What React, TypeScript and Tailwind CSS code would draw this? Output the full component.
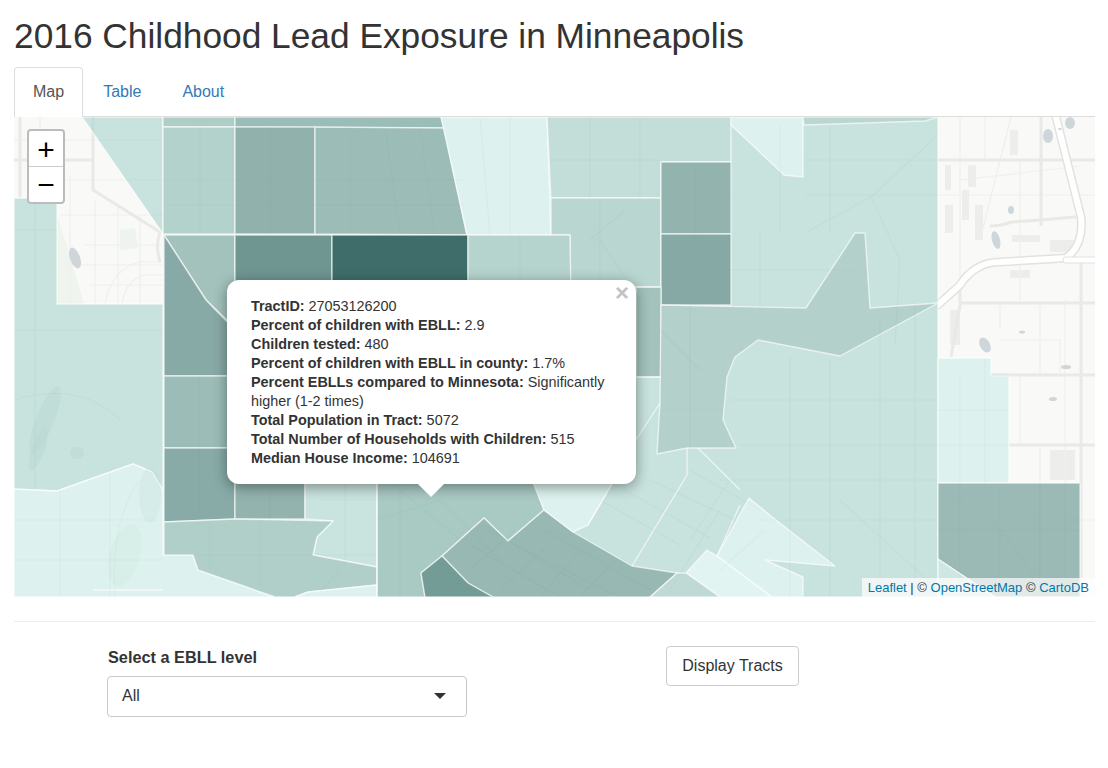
const sans = "font-['Liberation_Sans',Arial,sans-serif]";

type Tract = { readonly fill: string; readonly points: string };

// page coordinates, the map svg uses a matching viewBox
const tracts: ReadonlyArray<Tract> = [
  { fill: '#c8e2dd', points: '163,117 938,117 938,597 163,597' },
  { fill: '#c8e2dd', points: '14,198 57,198 57,304 163,304 163,490 152,472 133,464 57,491 14,489' },
  { fill: '#c8e2dd', points: '82,117 163,117 163,234' },
  { fill: '#ddf2ee', points: '14,489 57,491 133,464 152,472 163,490 163,555 193,555 198,570 275,597 14,597' },
  { fill: '#aecdc7', points: '163,117 235,117 235,127 163,127' },
  { fill: '#b4d2cc', points: '163,127 235,127 235,234 163,234' },
  { fill: '#9bbdb7', points: '235,117 441,117 444,128 235,127' },
  { fill: '#91b2ac', points: '235,127 315,127 315,234 235,234' },
  { fill: '#9cbdb7', points: '315,127 444,128 467,235 315,234' },
  { fill: '#ddf2ee', points: '441,117 547,117 551,235 467,235' },
  { fill: '#c3ddd8', points: '547,117 731,117 731,162 661,162 661,198 551,198' },
  { fill: '#b9d6d0', points: '551,198 661,198 661,287 570,287 570,235 551,235' },
  { fill: '#93b3ae', points: '661,162 731,162 731,234 661,234' },
  { fill: '#87a9a6', points: '661,234 731,234 731,305 661,305' },
  { fill: '#a3c2bc', points: '164,235 235,235 235,330 227,320 206,300' },
  { fill: '#88aaa6', points: '164,235 206,300 235,330 235,376 164,376' },
  { fill: '#6f9691', points: '235,235 332,235 332,300 235,300' },
  { fill: '#3f6e6a', points: '332,235 468,235 468,300 332,300' },
  { fill: '#b6d4ce', points: '468,235 570,235 571,300 468,300' },
  { fill: '#a3c2bc', points: '571,288 661,287 661,377 571,377' },
  { fill: '#9cbdb7', points: '164,376 235,376 235,448 164,448' },
  { fill: '#88aba7', points: '164,448 235,448 235,519 164,522' },
  { fill: '#92b3ae', points: '235,448 305,448 305,519 235,519' },
  { fill: '#c9e3de', points: '305,448 377,448 377,567 313,555 317,537 333,521 305,519' },
  { fill: '#b0cfc9', points: '164,522 235,519 333,521 317,537 313,555 377,567 377,585 308,592 295,597 275,597 198,570 193,555 164,555' },
  { fill: '#ddf2ee', points: '295,597 308,592 377,585 377,597' },
  { fill: '#a9c9c3', points: '377,470 530,470 544,510 508,541 484,518 442,556 421,573 425,597 377,597' },
  { fill: '#97b8b3', points: '442,556 484,518 508,541 544,510 573,532 632,566 677,573 650,597 493,597 468,583' },
  { fill: '#729c95', points: '442,556 468,583 493,597 425,597 421,573' },
  { fill: '#ddf2ee', points: '528,470 620,470 588,525 573,532 544,510' },
  { fill: '#ddf2ee', points: '731,117 803,117 803,177 784,175 731,125' },
  { fill: '#b9d6d0', points: '803,117 938,117 925,121 804,125' },
  { fill: '#b3d0ca', points: '661,305 806,308 855,233 865,233 870,308 938,303 840,356 758,340 735,357 727,377 723,420 736,448 687,448 657,454 660,403' },
  { fill: '#ddf2ee', points: '717,556 749,498 776,520 835,566 765,560 803,577 803,597 772,597' },
  { fill: '#e2f4f1', points: '707,550 717,556 772,597 720,597 686,573' },
  { fill: '#bfdad5', points: '677,573 686,573 720,597 650,597' },
  { fill: '#ddf2ee', points: '938,358 991,358 991,376 1009,376 1009,483 938,483' },
  { fill: '#9bbab5', points: '938,483 1080,483 1080,597 995,597 938,559' },
  { fill: '#cfe7e2', points: '938,559 995,597 938,597' },
];

const boundaries = [
  'M660 403 L636 440',
  'M687 448 L687 475 L632 566',
  'M698 448 L740 490',
  'M612 484 L588 525',
  'M636 288 L636 377 L661 377',
  'M377 448 L377 597',
  'M93 590 L163 590',
  'M740 505 L717 556',
];

const majorRoads = [
  'M938 160 H1095',
  'M1041 117 V226',
  'M990 226 Q1000 226 1012 222 L1041 220 L1085 216',
  'M1081 262 V597',
  'M960 303 H1095',
  'M991 375 H1095',
  'M1009 445 H1095',
  'M960 290 L960 305 L951 357',
  'M14 160 H93',
  'M20 117 V198',
  'M93 117 V190 L160 232 Q155 245 160 262',
];

const minorRoads = [
  'M14 140 H160', 'M60 180 H160', 'M60 215 H163', 'M85 245 H163', 'M60 265 H163', 'M90 285 H163',
  'M40 117 V198', 'M70 175 V304', 'M95 200 V304', 'M118 205 V304', 'M140 215 V304',
  'M105 304 Q112 268 140 262 H163',
  'M122 304 Q125 280 145 275 H163',
  'M938 195 H1095', 'M960 117 V300', 'M985 117 V160', 'M1020 160 V300', 'M1065 300 V597',
  'M1000 303 V330', 'M1040 303 V375', 'M1020 375 V445', 'M1010 520 H1095', 'M1040 445 V597',
  'M1011 117 L980 240',
  'M960 180 L1081 166',
  'M1000 340 H1060 V375',
  'M14 330 H163', 'M14 400 Q80 380 120 420', 'M14 520 H163', 'M14 560 H163', 'M60 489 V597', 'M110 470 V597',
  'M140 480 Q110 520 115 597', 'M14 230 H57', 'M35 198 V489',
  'M200 127 V234', 'M270 127 V234', 'M350 127 V234', 'M385 127 L400 234', 'M420 128 L435 234',
  'M163 180 H465', 'M163 205 H465', 'M480 117 L490 235', 'M510 117 V235',
  'M547 160 H661', 'M590 117 V198', 'M640 117 V198', 'M600 198 V287', 'M625 210 L590 240',
  'M696 162 V305', 'M661 198 H731', 'M661 270 H731',
  'M780 125 V233', 'M830 125 V233', 'M804 160 H938', 'M804 195 H938', 'M871 197 L805 233',
  'M938 135 L871 197 L900 260 L895 345', 'M760 233 V308', 'M731 270 H855',
  'M200 376 V448', 'M200 448 V519', 'M270 448 V519', 'M210 522 V570', 'M260 519 V585', 'M164 555 H377',
  'M345 484 V565', 'M320 500 H377', 'M340 570 L320 592',
  'M468 270 H570', 'M520 235 V300', 'M600 240 L640 300',
  'M690 305 V450', 'M700 370 L660 330', 'M660 410 H723', 'M790 356 V597', 'M830 360 V597', 'M880 320 V597', 'M915 305 V597',
  'M730 400 H938', 'M740 445 H938', 'M720 480 H938', 'M760 520 H938', 'M840 500 L938 590',
  'M400 484 V597', 'M377 520 L440 500', 'M400 490 L460 540', 'M440 500 L500 560',
  'M470 545 L560 597', 'M490 530 L590 590', 'M515 545 L620 597', 'M545 530 L650 590',
  'M470 570 L515 530', 'M500 590 L545 548', 'M540 597 L580 550', 'M580 597 L615 560',
  'M600 500 L680 545', 'M625 490 L710 538', 'M650 480 L735 520', 'M690 540 L730 480', 'M670 590 L720 510',
  'M690 470 L760 510', 'M720 570 L765 530', 'M950 500 Q1000 510 1040 590', 'M1000 483 V597', 'M938 530 H1080', 'M960 483 V597', 'M1040 483 V597',
  'M960 376 V483', 'M985 358 V483', 'M938 410 H1009', 'M938 445 H1009',
];

const Roads = ({ major, minor, opacity }: { readonly major: string; readonly minor: string; readonly opacity?: number }) => (
  <g fill="none" strokeOpacity={opacity}>
    <g stroke={minor} strokeWidth="1.2">
      {minorRoads.map((d) => (
        <path key={d} d={d} />
      ))}
    </g>
    <g stroke={major} strokeWidth="3">
      {majorRoads.map((d) => (
        <path key={d} d={d} />
      ))}
    </g>
  </g>
);

const MapPicture = () => (
  <svg viewBox="14 117 1081 480" className="block h-[480px] w-full">
    <rect x="14" y="117" width="1081" height="480" fill="#f9f9f7" />
    <polygon points="57,215 65,240 84,304 57,304" fill="#eff4ee" />
    <polygon points="120,230 135,228 138,248 120,250" fill="#eff3ee" />
    <g fill="#ededeb">
      <rect x="945" y="165" width="6" height="25" />
      <rect x="968" y="165" width="8" height="22" />
      <rect x="945" y="205" width="8" height="28" />
      <rect x="962" y="190" width="7" height="30" />
      <rect x="975" y="205" width="8" height="35" />
      <rect x="1012" y="235" width="28" height="7" />
      <rect x="1010" y="270" width="20" height="8" />
      <rect x="950" y="310" width="10" height="35" />
      <rect x="1010" y="130" width="8" height="25" />
      <rect x="1050" y="240" width="25" height="12" />
      <rect x="1050" y="450" width="25" height="30" />
    </g>
    <Roads major="#e9e9e7" minor="#efefed" />
    <g fill="none" strokeLinecap="round">
      <path d="M1056 117 L1081 217 Q1084 245 1066 258 L1000 262 Q975 262 960 285 L938 305" stroke="#e2e2e0" strokeWidth="9" />
      <path d="M1056 117 L1081 217 Q1084 245 1066 258 L1000 262 Q975 262 960 285 L938 305" stroke="#ffffff" strokeWidth="6" />
      <path d="M1066 260 H1095" stroke="#e2e2e0" strokeWidth="7" />
      <path d="M1066 260 H1095" stroke="#ffffff" strokeWidth="5" />
    </g>
    <g fill="#ced6da">
      <ellipse cx="75" cy="258" rx="5" ry="11" transform="rotate(-20 75 258)" />
      <ellipse cx="1070" cy="123" rx="5" ry="6" />
      <ellipse cx="1048" cy="136" rx="5" ry="7" />
      <ellipse cx="1011" cy="210" rx="3" ry="4" />
      <ellipse cx="996" cy="240" rx="4" ry="9" transform="rotate(-15 996 240)" />
      <ellipse cx="985" cy="345" rx="5" ry="8" transform="rotate(-30 985 345)" />
      <ellipse cx="1066" cy="367" rx="5" ry="2" />
      <ellipse cx="1053" cy="399" rx="4" ry="2" />
      <ellipse cx="1022" cy="332" rx="3" ry="1.5" />
      <ellipse cx="1060" cy="129" rx="2" ry="1" />
    </g>
    {tracts.map((t) => (
      <polygon key={t.points} points={t.points} fill={t.fill} stroke="#ffffff" strokeOpacity="0.65" strokeWidth="1.4" strokeLinejoin="round" />
    ))}
    <g fill="none" stroke="#ffffff" strokeOpacity="0.65" strokeWidth="1.3">
      {boundaries.map((d) => (
        <path key={d} d={d} />
      ))}
    </g>
    <g fill="#b9d7d1" fillOpacity="0.5">
      <ellipse cx="45" cy="420" rx="9" ry="36" transform="rotate(22 45 420)" />
      <ellipse cx="38" cy="450" rx="6" ry="22" transform="rotate(20 38 450)" />
      <ellipse cx="77" cy="453" rx="7" ry="6" />
      <ellipse cx="150" cy="495" rx="11" ry="28" fillOpacity="0.2" />
      <ellipse cx="125" cy="555" rx="15" ry="32" fillOpacity="0.15" transform="rotate(15 125 555)" />
    </g>
    <g clipPath="url(#tract-area)">
      <Roads major="#6d9a93" minor="#6d9a93" opacity={0.06} />
    </g>
    <defs>
      <clipPath id="tract-area">
        <polygon points="82,117 938,117 938,358 1009,358 1009,483 1080,483 1080,597 14,597 14,198 57,198 57,304 163,304 163,234" />
      </clipPath>
    </defs>
  </svg>
);

const Popup = () => (
  <div className="absolute left-[213px] top-[163px] w-[409px]">
    <div className="relative rounded-xl bg-white pt-[17px] pb-[16px] pl-6 pr-6 text-[14.4px] leading-[19px] text-[#333] shadow-[0_3px_14px_rgba(0,0,0,0.4)]">
      <span className="absolute right-[7px] top-[3px] text-[24px] leading-[19px] font-bold text-[#c3c3c3]">×</span>
      <p><b>TractID:</b> 27053126200</p>
      <p><b>Percent of children with EBLL:</b> 2.9</p>
      <p><b>Children tested:</b> 480</p>
      <p><b>Percent of children with EBLL in county:</b> 1.7%</p>
      <p><b>Percent EBLLs compared to Minnesota:</b> Significantly higher (1-2 times)</p>
      <p><b>Total Population in Tract:</b> 5072</p>
      <p><b>Total Number of Households with Children:</b> 515</p>
      <p><b>Median House Income:</b> 104691</p>
    </div>
    <div className="absolute bottom-[-13px] left-[191px] h-0 w-0 border-x-[13px] border-t-[13px] border-x-transparent border-t-white" />
  </div>
);

export default function App() {
  return (
    <div className={`${sans} min-h-[768px] bg-white pl-[14px] pr-[13px] text-[#333]`}>
      <h1 className="pt-[16px] pb-[11px] text-[35.3px] leading-[40px] font-normal">2016 Childhood Lead Exposure in Minneapolis</h1>
      <ul className="flex h-[50px] border-b border-[#ddd] text-[16px]">
        <li className="mr-[1px] h-[50px] rounded-t border border-b-0 border-[#ddd] bg-white px-[18px] pt-[14px] leading-[20px] text-[#555]">Map</li>
        <li className="mr-[3px] border border-transparent px-[18px] pt-[14px] leading-[20px] text-[#337ab7]">Table</li>
        <li className="border border-transparent px-[18px] pt-[14px] leading-[20px] text-[#337ab7]">About</li>
      </ul>
      <div className="relative h-[480px] overflow-hidden">
        <MapPicture />
        <div className="absolute left-[13px] top-[12px] w-[38px] rounded border-2 border-[#bcbcbc] bg-white text-black">
          <div className="flex h-[36px] items-center justify-center border-b border-[#ccc] pt-[2px] text-[30px] leading-none">+</div>
          <div className="flex h-[35px] items-center justify-center text-[30px] leading-none">−</div>
        </div>
        <Popup />
        <div className="absolute bottom-0 right-0 bg-white/70 px-[6px] text-[13px] leading-[19px] text-[#333]">
          <span className="text-[#0078a8]">Leaflet</span> | © <span className="text-[#0078a8]">OpenStreetMap</span> © <span className="text-[#0078a8]">CartoDB</span>
        </div>
      </div>
      <hr className="mt-[24px] border-t border-[#eee]" />
      <div className="flex items-start pl-[93px] pt-[24px]">
        <div className="w-[360px] pt-[1px]">
          <label className="ml-px block text-[16.3px] leading-[20px] font-bold">Select a EBLL level</label>
          <div className="mt-[9px] flex h-[41px] items-center justify-between rounded border border-[#c8c8c8] pb-[2px] pl-[14px] pr-[20px] text-[16px]">
            <span>All</span>
            <span className="h-0 w-0 border-x-[6.5px] border-t-[6px] border-x-transparent border-t-[#333]" />
          </div>
        </div>
        <button className="ml-[199px] h-[40px] w-[133px] rounded border border-[#ccc] bg-white text-[16px] text-[#333]">Display Tracts</button>
      </div>
    </div>
  );
}
